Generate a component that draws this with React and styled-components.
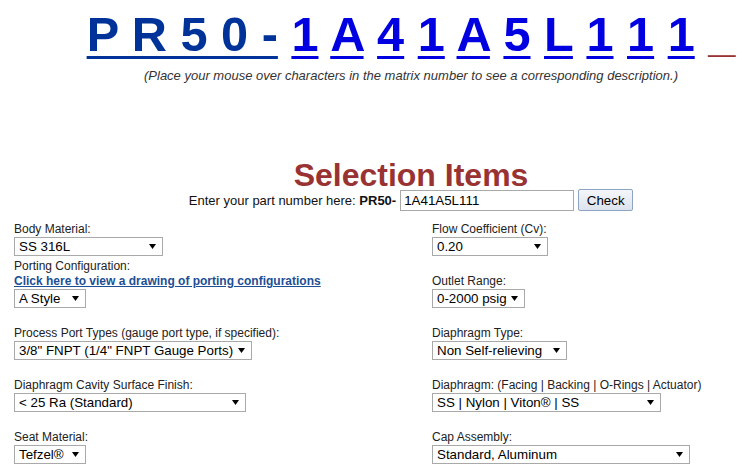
import React from "react";
import styled, { createGlobalStyle } from "styled-components";

const Global = createGlobalStyle`
  html, body { margin: 0; padding: 0; background: #fff; overflow: hidden; }
  body { font-family: "Liberation Sans", Arial, sans-serif; color: #222; }
`;

const Page = styled.div`
  width: 746px;
  padding-top: 7px;
  display: flex;
  flex-direction: column;
`;

const Centered = styled.div`
  box-sizing: border-box;
  padding-left: 76px;
  display: flex;
  flex-direction: column;
`;

const Matrix = styled.div`
  text-align: center;
  font-size: 48.7px;
  line-height: 55px;
  font-weight: bold;
  white-space: nowrap;
`;

const MatrixBase = styled.span`
  color: #003399;
  text-decoration: underline;
  text-decoration-thickness: 3px;
  text-underline-offset: 5px;
`;

const MatrixChar = styled.span`
  color: #0000e0;
  text-decoration: underline;
  text-decoration-thickness: 3px;
  text-underline-offset: 5px;
  cursor: pointer;
`;

const MatrixTail = styled.span`
  color: #993333;
`;

const Hint = styled.div`
  margin-top: 6px;
  text-align: center;
  font-size: 13px;
  line-height: 15px;
  font-style: italic;
  color: #333;
  white-space: nowrap;
`;

const Title = styled.h1`
  margin: 78px 0 0;
  text-align: center;
  font-size: 32px;
  line-height: 28px;
  font-weight: bold;
  color: #993333;
`;

const PartRow = styled.div`
  display: flex;
  justify-content: center;
  align-items: center;
  gap: 4px;
  height: 22px;
  font-size: 13px;
  color: #111;
  white-space: nowrap;
`;

const Prompt = styled.span`
  b { font-weight: bold; }
`;

const PartInput = styled.input`
  box-sizing: border-box;
  width: 174px;
  height: 21px;
  border: 1px solid #a9a9a9;
  padding: 1px 3px;
  font-family: "Liberation Sans", Arial, sans-serif;
  font-size: 13.33px;
  color: #000;
  outline: none;
`;

const CheckButton = styled.button`
  box-sizing: border-box;
  width: 55px;
  height: 22px;
  border: 1px solid #8ea4c4;
  border-radius: 2px;
  background: linear-gradient(#f4f6f9, #dde3ec);
  font-family: "Liberation Sans", Arial, sans-serif;
  font-size: 13.33px;
  color: #000;
  padding: 0;
`;

const Columns = styled.div`
  margin-top: 11px;
  padding-left: 14px;
  display: grid;
  grid-template-columns: 418px 1fr;
`;

const Column = styled.div`
  display: flex;
  flex-direction: column;
`;

const Field = styled.div`
  display: flex;
  flex-direction: column;
  align-items: flex-start;
  margin-bottom: ${(p) => (p.$space ?? 15)}px;
`;

const Label = styled.div`
  font-size: 12px;
  line-height: 15px;
  color: #222;
  white-space: nowrap;
`;

const DrawingLink = styled.a`
  font-size: 12px;
  line-height: 15px;
  font-weight: bold;
  color: #1c4f94;
  text-decoration: underline;
  cursor: pointer;
  white-space: nowrap;
`;

const SelectBox = styled.div`
  box-sizing: border-box;
  width: ${(p) => p.$w}px;
  height: 19px;
  margin-bottom: 3px;
  display: flex;
  align-items: center;
  justify-content: space-between;
  border: 1px solid #a9a9a9;
  background: #fff;
  padding: 0 6px 0 4px;
  font-size: 13.33px;
  color: #000;
  white-space: nowrap;
`;

const Arrow = () => (
  <svg width="7" height="5" viewBox="0 0 7 5">
    <polygon points="0,0 7,0 3.5,5" fill="#000" />
  </svg>
);

const Select = ({ w, children }) => (
  <SelectBox $w={w}>
    <span>{children}</span>
    <Arrow />
  </SelectBox>
);

const chars = ["1", "A", "4", "1", "A", "5", "L", "1", "1", "1"];

export default function App() {
  return (
    <>
      <Global />
      <Page>
        <Centered>
          <Matrix>
            <MatrixBase>P R 5 0 -</MatrixBase>
            {chars.map((c, i) => (
              <React.Fragment key={i}>
                {" "}
                <MatrixChar>{c}</MatrixChar>
              </React.Fragment>
            ))}{" "}
            <MatrixTail>_</MatrixTail>
          </Matrix>
          <Hint>
            (Place your mouse over characters in the matrix number to see a corresponding description.)
          </Hint>
          <Title>Selection Items</Title>
          <PartRow>
            <Prompt>
              Enter your part number here: <b>PR50-</b>
            </Prompt>
            <PartInput defaultValue="1A41A5L111" />
            <CheckButton>Check</CheckButton>
          </PartRow>
        </Centered>
        <Columns>
          <Column>
            <Field $space={0}>
              <Label>Body Material:</Label>
              <Select w={149}>SS 316L</Select>
            </Field>
            <Field>
              <Label>Porting Configuration:</Label>
              <DrawingLink>Click here to view a drawing of porting configurations</DrawingLink>
              <Select w={72}>A Style</Select>
            </Field>
            <Field>
              <Label>Process Port Types (gauge port type, if specified):</Label>
              <Select w={238}>3/8" FNPT (1/4" FNPT Gauge Ports)</Select>
            </Field>
            <Field>
              <Label>Diaphragm Cavity Surface Finish:</Label>
              <Select w={232}>&lt; 25 Ra (Standard)</Select>
            </Field>
            <Field>
              <Label>Seat Material:</Label>
              <Select w={72}>Tefzel®</Select>
            </Field>
          </Column>
          <Column>
            <Field>
              <Label>Flow Coefficient (Cv):</Label>
              <Select w={116}>0.20</Select>
            </Field>
            <Field>
              <Label>Outlet Range:</Label>
              <Select w={93}>0-2000 psig</Select>
            </Field>
            <Field>
              <Label>Diaphragm Type:</Label>
              <Select w={135}>Non Self-relieving</Select>
            </Field>
            <Field>
              <Label>Diaphragm: (Facing | Backing | O-Rings | Actuator)</Label>
              <Select w={229}>SS | Nylon | Viton® | SS</Select>
            </Field>
            <Field>
              <Label>Cap Assembly:</Label>
              <Select w={258}>Standard, Aluminum</Select>
            </Field>
          </Column>
        </Columns>
      </Page>
    </>
  );
}
